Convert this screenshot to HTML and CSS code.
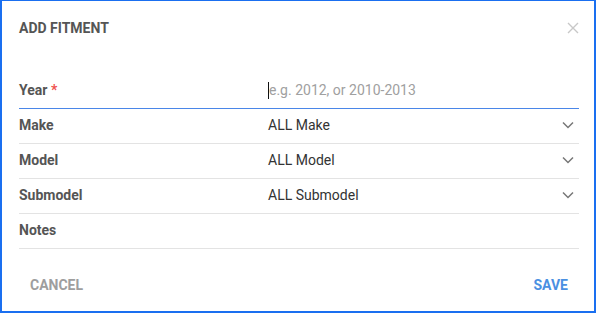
FILE: index.html
```html
<!DOCTYPE html>
<html lang="en">
<head>
    <meta charset="UTF-8">
    <title>Add Fitment</title>
    <link rel="stylesheet" href="styles.css">
</head>
<body>
    <div class="dialog">
        <div class="dialog-header">
            <h1>ADD FITMENT</h1>
            <button class="close" aria-label="Close">
                <svg width="12" height="12" viewBox="0 0 12 12"><path d="M1 1L11 11M11 1L1 11" stroke="#c8c8c8" stroke-width="1.4" fill="none"/></svg>
            </button>
        </div>

        <div class="form">
            <div class="row active">
                <label>Year <span class="req">*</span></label>
                <div class="field"><span class="caret"></span><input type="text" placeholder="e.g. 2012, or 2010-2013"></div>
            </div>
            <div class="row">
                <label>Make</label>
                <div class="field select">ALL Make
                    <svg width="12" height="8" viewBox="0 0 12 8"><path d="M1 1.5L6 6.5L11 1.5" stroke="#777" stroke-width="1.5" fill="none"/></svg>
                </div>
            </div>
            <div class="row">
                <label>Model</label>
                <div class="field select">ALL Model
                    <svg width="12" height="8" viewBox="0 0 12 8"><path d="M1 1.5L6 6.5L11 1.5" stroke="#777" stroke-width="1.5" fill="none"/></svg>
                </div>
            </div>
            <div class="row">
                <label>Submodel</label>
                <div class="field select">ALL Submodel
                    <svg width="12" height="8" viewBox="0 0 12 8"><path d="M1 1.5L6 6.5L11 1.5" stroke="#777" stroke-width="1.5" fill="none"/></svg>
                </div>
            </div>
            <div class="row">
                <label>Notes</label>
                <div class="field"></div>
            </div>
        </div>

        <div class="dialog-footer">
            <button class="btn cancel">CANCEL</button>
            <button class="btn save">SAVE</button>
        </div>
    </div>
</body>
</html>
```

FILE: styles.css
```css
body {
    margin: 0;
    font-family: 'Roboto', 'Liberation Sans', sans-serif;
    background-color: white;
}
.dialog {
    box-sizing: border-box;
    width: 596px;
    height: 313px;
    border: 2px solid #1a6ff0;
    border-top-width: 1px;
    padding: 17px 15px 0 17px;
}
.dialog-header {
    display: flex;
    justify-content: space-between;
    align-items: center;
    height: 20px;
}
.dialog-header h1 {
    margin: 0;
    font-size: 14px;
    font-weight: 700;
    color: #555;
    line-height: 20px;
}
.close {
    border: none;
    background: none;
    padding: 0;
    width: 12px;
    height: 12px;
    display: flex;
}
.form {
    margin-top: 36px;
}
.row {
    display: grid;
    grid-template-columns: 249px 1fr;
    align-items: center;
    box-sizing: border-box;
    height: 35px;
    padding-bottom: 2px;
    border-bottom: 1px solid #e3e3e3;
}
.row.active {
    border-bottom-color: #4a86e8;
}
.row label {
    font-size: 14px;
    font-weight: 700;
    color: #555;
}
.req {
    color: #ef5350;
}
.field {
    display: flex;
    align-items: center;
    font-size: 14px;
    color: #333;
}
.caret {
    width: 1px;
    height: 17px;
    background-color: #111;
}
.field input {
    flex: 1;
    border: none;
    outline: none;
    padding: 0;
    font-family: inherit;
    font-size: 14px;
    color: #333;
}
.field input::placeholder {
    color: #a0a0a0;
}
.select {
    justify-content: space-between;
    padding-right: 5px;
}
.dialog-footer {
    display: flex;
    justify-content: space-between;
    margin-top: 18px;
}
.btn {
    border: none;
    background: none;
    height: 36px;
    padding: 0 11px;
    font-family: inherit;
    font-size: 14px;
    font-weight: 700;
    cursor: pointer;
}
.cancel {
    color: #9e9e9e;
}
.save {
    color: #4a90e2;
}
```
